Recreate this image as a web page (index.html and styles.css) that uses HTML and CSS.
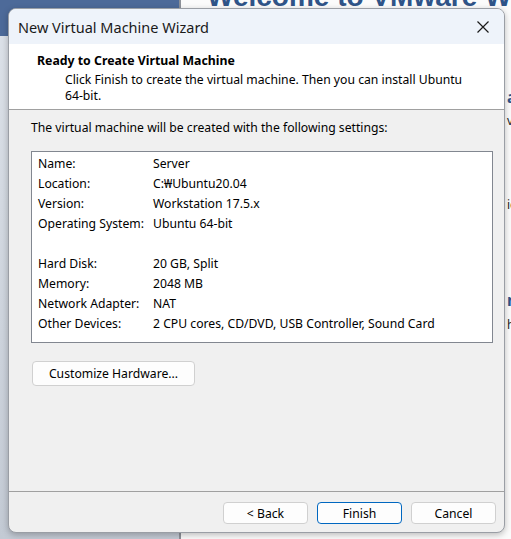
FILE: index.html
```html
<!DOCTYPE html>
<html>
<head>
<meta charset="utf-8">
<link rel="stylesheet" href="styles.css">
</head>
<body>
<div class="desktop">
  <div class="leftpane">
    <div class="leftband"></div>
  </div>
  <div class="divider"></div>
  <div class="rightpane">
    <div class="welcome">Welcome to VMware Workstation</div>
    <div class="frag frag-a">a</div>
    <div class="frag frag-v">v</div>
    <div class="frag frag-ic">ic</div>
    <div class="frag frag-n">n</div>
    <div class="frag frag-h">h</div>
  </div>
</div>

<div class="dialog">
  <div class="titlebar">
    <span class="title">New Virtual Machine Wizard</span>
    <svg class="close" width="12" height="12" viewBox="0 0 12 12">
      <path d="M0.5 0.5 L11.5 11.5 M11.5 0.5 L0.5 11.5" stroke="#1a1a1a" stroke-width="1.2" fill="none"/>
    </svg>
  </div>
  <div class="header">
    <div class="h-title">Ready to Create Virtual Machine</div>
    <div class="h-sub">Click Finish to create the virtual machine. Then you can install Ubuntu 64-bit.</div>
  </div>
  <div class="body">
    <div class="intro">The virtual machine will be created with the following settings:</div>
    <div class="settings">
      <div class="row"><span class="k">Name:</span><span class="v">Server</span></div>
      <div class="row"><span class="k">Location:</span><span class="v">C:₩Ubuntu20.04</span></div>
      <div class="row"><span class="k">Version:</span><span class="v">Workstation 17.5.x</span></div>
      <div class="row"><span class="k">Operating System:</span><span class="v">Ubuntu 64-bit</span></div>
      <div class="row blank"></div>
      <div class="row"><span class="k">Hard Disk:</span><span class="v">20 GB, Split</span></div>
      <div class="row"><span class="k">Memory:</span><span class="v">2048 MB</span></div>
      <div class="row"><span class="k">Network Adapter:</span><span class="v">NAT</span></div>
      <div class="row"><span class="k">Other Devices:</span><span class="v">2 CPU cores, CD/DVD, USB Controller, Sound Card</span></div>
    </div>
    <div class="custom-wrap"><button class="btn custom">Customize Hardware...</button></div>
  </div>
  <div class="footer">
    <button class="btn nav">&lt; Back</button>
    <button class="btn nav primary">Finish</button>
    <button class="btn nav">Cancel</button>
  </div>
</div>
</body>
</html>
```
FILE: styles.css
```css
html, body {
  margin: 0;
  padding: 0;
  width: 511px;
  height: 539px;
  overflow: hidden;
}
body {
  position: relative;
  font-family: "Noto Sans", "Open Sans", sans-serif;
  background: #c9ced6;
}
.desktop {
  display: flex;
  width: 511px;
  height: 539px;
}
.leftpane {
  width: 179px;
  height: 539px;
  background: linear-gradient(to bottom, #dde2e9 0%, #c3cad4 100%);
}
.leftband {
  height: 36px;
  background: #4d6a99;
}
.divider {
  width: 2px;
  background: #8d9199;
}
.rightpane {
  flex: 1;
  position: relative;
  background: #fbfbfb;
  overflow: hidden;
}
.welcome {
  position: absolute;
  left: 26px;
  top: -19px;
  font-family: "Liberation Sans", sans-serif;
  font-weight: bold;
  font-size: 28px;
  color: #2f5488;
  white-space: nowrap;
}
.frag {
  position: absolute;
  left: 326px;
  font-size: 12px;
  color: #222;
  white-space: nowrap;
}
.frag-a { top: 86px; font-weight: bold; font-size: 16px; color: #2f5488; }
.frag-v { top: 112px; }
.frag-ic { top: 196px; }
.frag-n { top: 289px; font-weight: bold; font-size: 16px; color: #2f5488; }
.frag-h { top: 316px; }

.dialog {
  position: absolute;
  left: 8px;
  top: 8px;
  width: 497px;
  height: 525px;
  border-radius: 8px;
  background: #f0f0f0;
  border: 1px solid #9a9ea5;
  box-sizing: border-box;
  box-shadow: 0 2px 6px rgba(0, 0, 0, 0.25);
  overflow: hidden;
  display: flex;
  flex-direction: column;
  color: #000;
}
.titlebar {
  height: 35px;
  background: #eef3fa;
  display: flex;
  align-items: center;
  justify-content: space-between;
  padding: 0 15px 0 9px;
  flex-shrink: 0;
}
.title {
  font-size: 14.5px;
  color: #1a1a1a;
}
.close {
  display: block;
}
.header {
  height: 66px;
  background: #ffffff;
  border-bottom: 1px solid #a0a0a0;
  padding: 9px 0 0 28px;
  box-sizing: border-box;
  flex-shrink: 0;
}
.h-title {
  font-weight: bold;
  font-size: 12.3px;
  line-height: 16px;
}
.h-sub {
  font-size: 12.2px;
  line-height: 16px;
  margin-top: 3px;
  padding-left: 28px;
  width: 410px;
}
.body {
  flex: 1;
  padding: 10px 12px 0 22px;
}
.intro {
  font-size: 12.2px;
  line-height: 16px;
}
.settings {
  margin-top: 15px;
  width: 462px;
  height: 192px;
  background: #fff;
  border: 1px solid #828790;
  box-sizing: border-box;
  padding: 1px 0 0 6px;
}
.row {
  display: flex;
  height: 20px;
  align-items: center;
  font-size: 12.2px;
  white-space: nowrap;
}
.k {
  width: 115px;
  flex-shrink: 0;
}
.custom-wrap {
  margin-top: 18px;
}
.btn {
  font-family: "Noto Sans", "Open Sans", sans-serif;
  font-size: 12.2px;
  color: #000;
  background: #fdfdfd;
  border: 1px solid #d0d0d0;
  border-radius: 4px;
  padding: 0;
  box-sizing: border-box;
}
.custom {
  width: 163px;
  height: 25px;
  margin-left: 1px;
}
.footer {
  height: 41px;
  border-top: 1px solid #a0a0a0;
  display: flex;
  justify-content: flex-end;
  align-items: flex-start;
  gap: 9px;
  padding: 10px 8px 0 0;
  box-sizing: border-box;
  flex-shrink: 0;
}
.nav {
  width: 85px;
  height: 22px;
}
.primary {
  border: 1px solid #0067c0;
}
```
